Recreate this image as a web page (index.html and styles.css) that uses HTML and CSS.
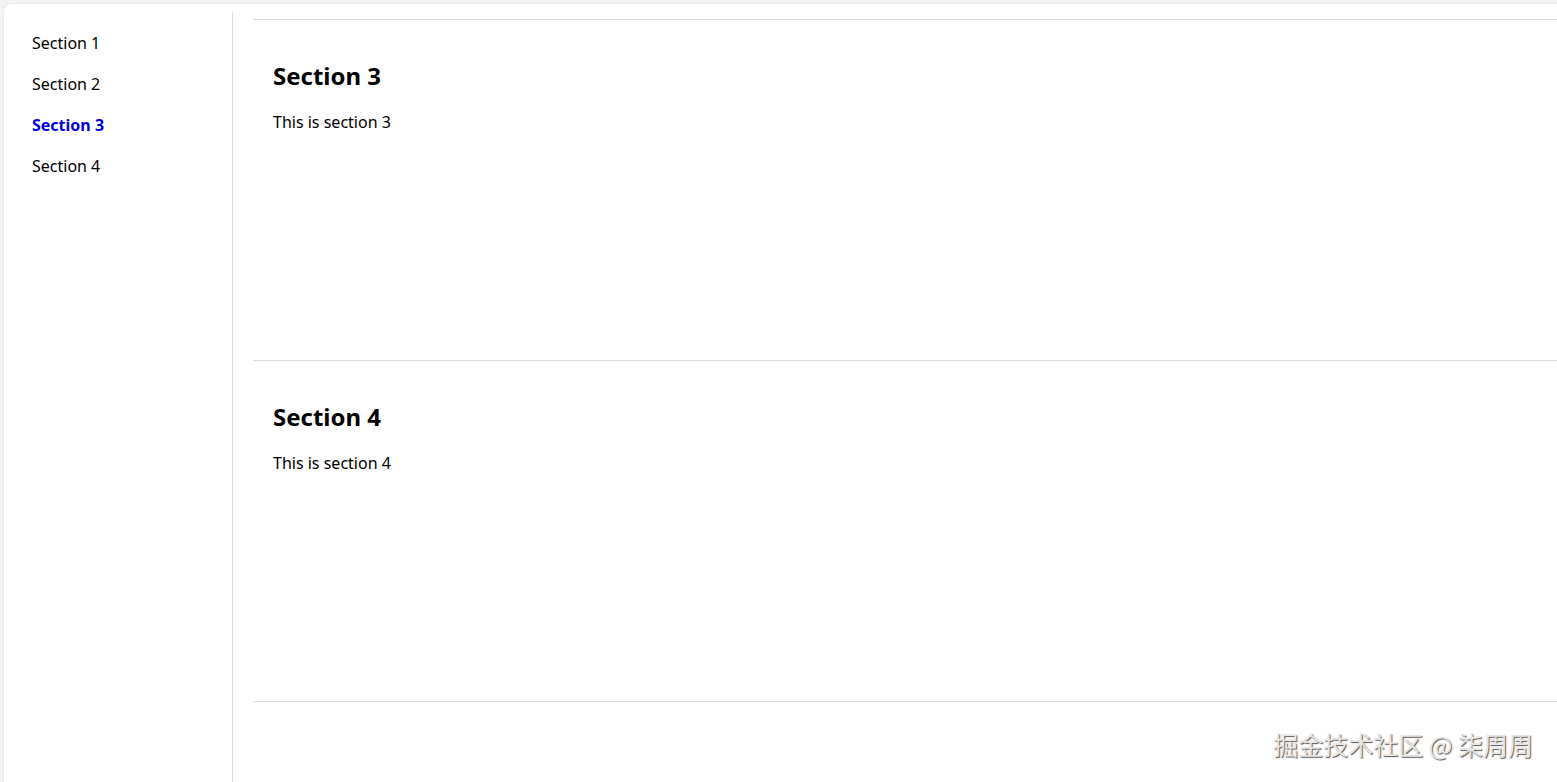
FILE: index.html
```html
<!DOCTYPE html>
<html lang="zh">
<head>
<meta charset="utf-8">
<title>Anchor Sections</title>
<link rel="stylesheet" href="styles.css">
</head>
<body>
<div class="card">
  <nav class="sidebar">
    <a class="nav-item">Section 1</a>
    <a class="nav-item">Section 2</a>
    <a class="nav-item active">Section 3</a>
    <a class="nav-item">Section 4</a>
  </nav>
  <main class="content">
    <section class="section">
      <h2>Section 3</h2>
      <p>This is section 3</p>
    </section>
    <section class="section">
      <h2>Section 4</h2>
      <p>This is section 4</p>
    </section>
  </main>
</div>
<div class="watermark">掘金技术社区 @ 柒周周</div>
</body>
</html>
```
FILE: styles.css
```css
html, body {
  margin: 0;
  height: 100%;
  overflow: hidden;
}
body {
  background: #f3f3f3;
  padding: 4px 0 0 4px;
  box-sizing: border-box;
  font-family: "Noto Sans", "Noto Sans CJK SC", sans-serif;
  color: #000;
}
.card {
  background: #fff;
  border-radius: 8px 0 0 0;
  box-shadow: 0 0 2px rgba(0,0,0,0.12);
  padding-top: 8px;
  display: flex;
  height: calc(100% + 20px);
  box-sizing: border-box;
}
.sidebar {
  width: 229px;
  flex: none;
  border-right: 1px solid #dcdcdc;
  box-sizing: border-box;
  padding-top: 11px;
  display: flex;
  flex-direction: column;
}
.nav-item {
  display: block;
  padding: 10px 28px;
  font-size: 16px;
  line-height: 21px;
  color: #000;
}
.nav-item.active {
  color: #0000dd;
  font-weight: 700;
}
.content {
  flex: 1;
  padding: 7px 0 0 20px;
}
.section {
  border-top: 1px solid #dcdcdc;
  height: 320px;
  padding: 20px 20px 0;
}
.section:last-child {
  border-bottom: 1px solid #dcdcdc;
}
.section h2 {
  margin: 20px 0;
  font-size: 24px;
  line-height: 32px;
  font-weight: 700;
}
.section p {
  margin: 0;
  font-size: 16px;
  line-height: 21px;
}
.watermark {
  position: absolute;
  right: 24px;
  top: 728px;
  font-size: 25px;
  line-height: 32px;
  color: #e6e6e6;
  text-shadow: 1px 1px 1px #555;
  font-family: "Noto Sans CJK SC", sans-serif;
}
```
